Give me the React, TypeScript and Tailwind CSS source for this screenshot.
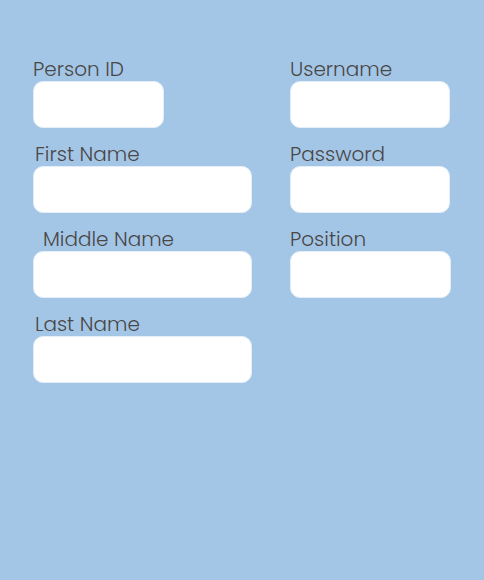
import React from "react";

function Field({ label, labelPad = "", width }: { label: string; labelPad?: string; width: string }) {
  return (
    <div className="flex flex-col">
      <div className={`text-[20px] leading-[22px] font-light text-[#4a4747] ${labelPad}`}>{label}</div>
      <div className={`mt-[1px] h-[47px] rounded-[10px] bg-white border border-[#e4eef8] ${width}`} />
    </div>
  );
}

export default function App() {
  return (
    <div className="w-full h-[580px] bg-[#a3c6e6] pt-[58px] pl-[33px]" style={{ fontFamily: "Poppins, 'Open Sans', sans-serif" }}>
      <div className="grid grid-cols-[257px_161px] gap-y-[15px]">
        <Field label="Person ID" width="w-[131px]" />
        <Field label="Username" width="w-[160px]" />
        <Field label="First Name" labelPad="pl-[2px]" width="w-[219px]" />
        <Field label="Password" width="w-[160px]" />
        <Field label="Middle Name" labelPad="pl-[10px]" width="w-[219px]" />
        <Field label="Position" width="w-[161px]" />
        <Field label="Last Name" labelPad="pl-[2px]" width="w-[219px]" />
      </div>
    </div>
  );
}
